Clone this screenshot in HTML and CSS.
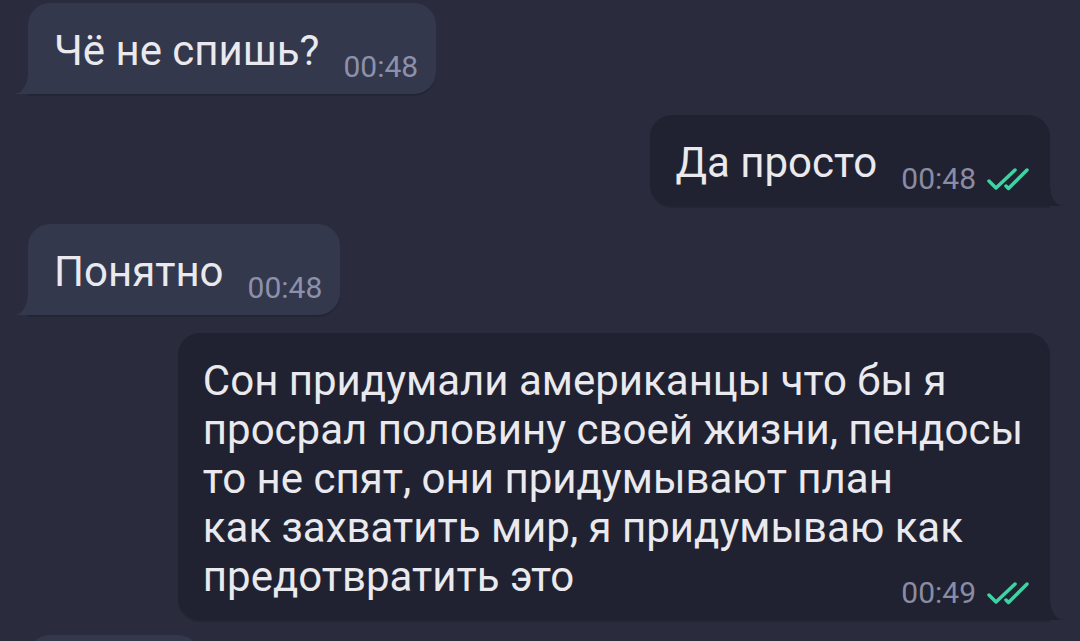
FILE: index.html
```html
<!DOCTYPE html>
<html lang="ru">
  <head>
    <meta charset="utf-8" />
    <link rel="stylesheet" href="styles.css">
  </head>

  <body>
    <div class="chat">
      <div class="bubble in first">
        <span class="meta"><span class="time">00:48</span></span>Чё не спишь?
      </div>

      <div class="bubble out">
        <span class="meta">
          <span class="time">00:48</span>
          <svg class="check" viewBox="0 0 44 24" width="44" height="24"><path d="M3 14l7 7L29 3M20 19l2.5 2.5L41 3" /></svg>
        </span>Да просто
      </div>

      <div class="bubble in">
        <span class="meta"><span class="time">00:48</span></span>Понятно
      </div>

      <div class="bubble out long">
        Сон придумали американцы что бы я<br>
        просрал половину своей жизни, пендосы<br>
        то не спят, они придумывают план<br>
        как захватить мир, я придумываю как<br>
        <span class="meta">
          <span class="time">00:49</span>
          <svg class="check" viewBox="0 0 44 24" width="44" height="24"><path d="M3 14l7 7L29 3M20 19l2.5 2.5L41 3" /></svg>
        </span>предотвратить это
      </div>

      <!-- следующее сообщение, уходит за нижний край -->
      <div class="bubble in stub"></div>
    </div>
  </body>
</html>
```

FILE: styles.css
```css
body {
  margin: 0;
  height: 641px;
  overflow: hidden;
  background: #2a2c3e;
  font-family: Roboto, "Noto Sans", sans-serif;
}

.chat {
  display: flex;
  flex-direction: column;
  gap: 18px;
  padding: 3px 30px 0 28px;
}

.bubble {
  position: relative;
  display: flow-root;
  padding: 23px 18px 12px 26px;
  border-radius: 22px;
  font-size: 42px;
  line-height: 49px;
  color: #e9e9ee;
  white-space: nowrap;
  box-shadow: 0 2px 1px rgba(0, 0, 0, 0.16);
}

.first {
  margin-bottom: 3px;
}

.in {
  align-self: flex-start;
  background: #34384d;
  border-bottom-left-radius: 0;
}

.out {
  align-self: flex-end;
  background: #202231;
  border-bottom-right-radius: 0;
  padding-left: 25px;
  padding-right: 20px;
}

.long {
  padding-right: 27px;
}

.stub {
  width: 128px;
  height: 56px;
  margin-top: -3px;
}

/* хвостики у пузырей */
.in::before,
.out::after {
  content: "";
  position: absolute;
  bottom: 0;
  width: 13px;
  height: 20px;
}

.in::before {
  left: -13px;
  background: radial-gradient(ellipse 13px 20px at 0 0, transparent 96%, #34384d 100%);
}

.out::after {
  right: -13px;
  background: radial-gradient(ellipse 13px 20px at 100% 0, transparent 96%, #202231 100%);
}

.meta {
  float: right;
  display: flex;
  align-items: center;
  gap: 10px;
  margin: 26px 0 0 24px;
  font-size: 30px;
  line-height: 30px;
  color: #8c91ab;
}

.out .meta {
  color: #898ca3;
}

.long .meta {
  margin-right: -7px;
}

.check {
  display: block;
  fill: none;
  stroke: #3fd3a4;
  stroke-width: 3.5;
  stroke-linecap: round;
  stroke-linejoin: round;
}
```
